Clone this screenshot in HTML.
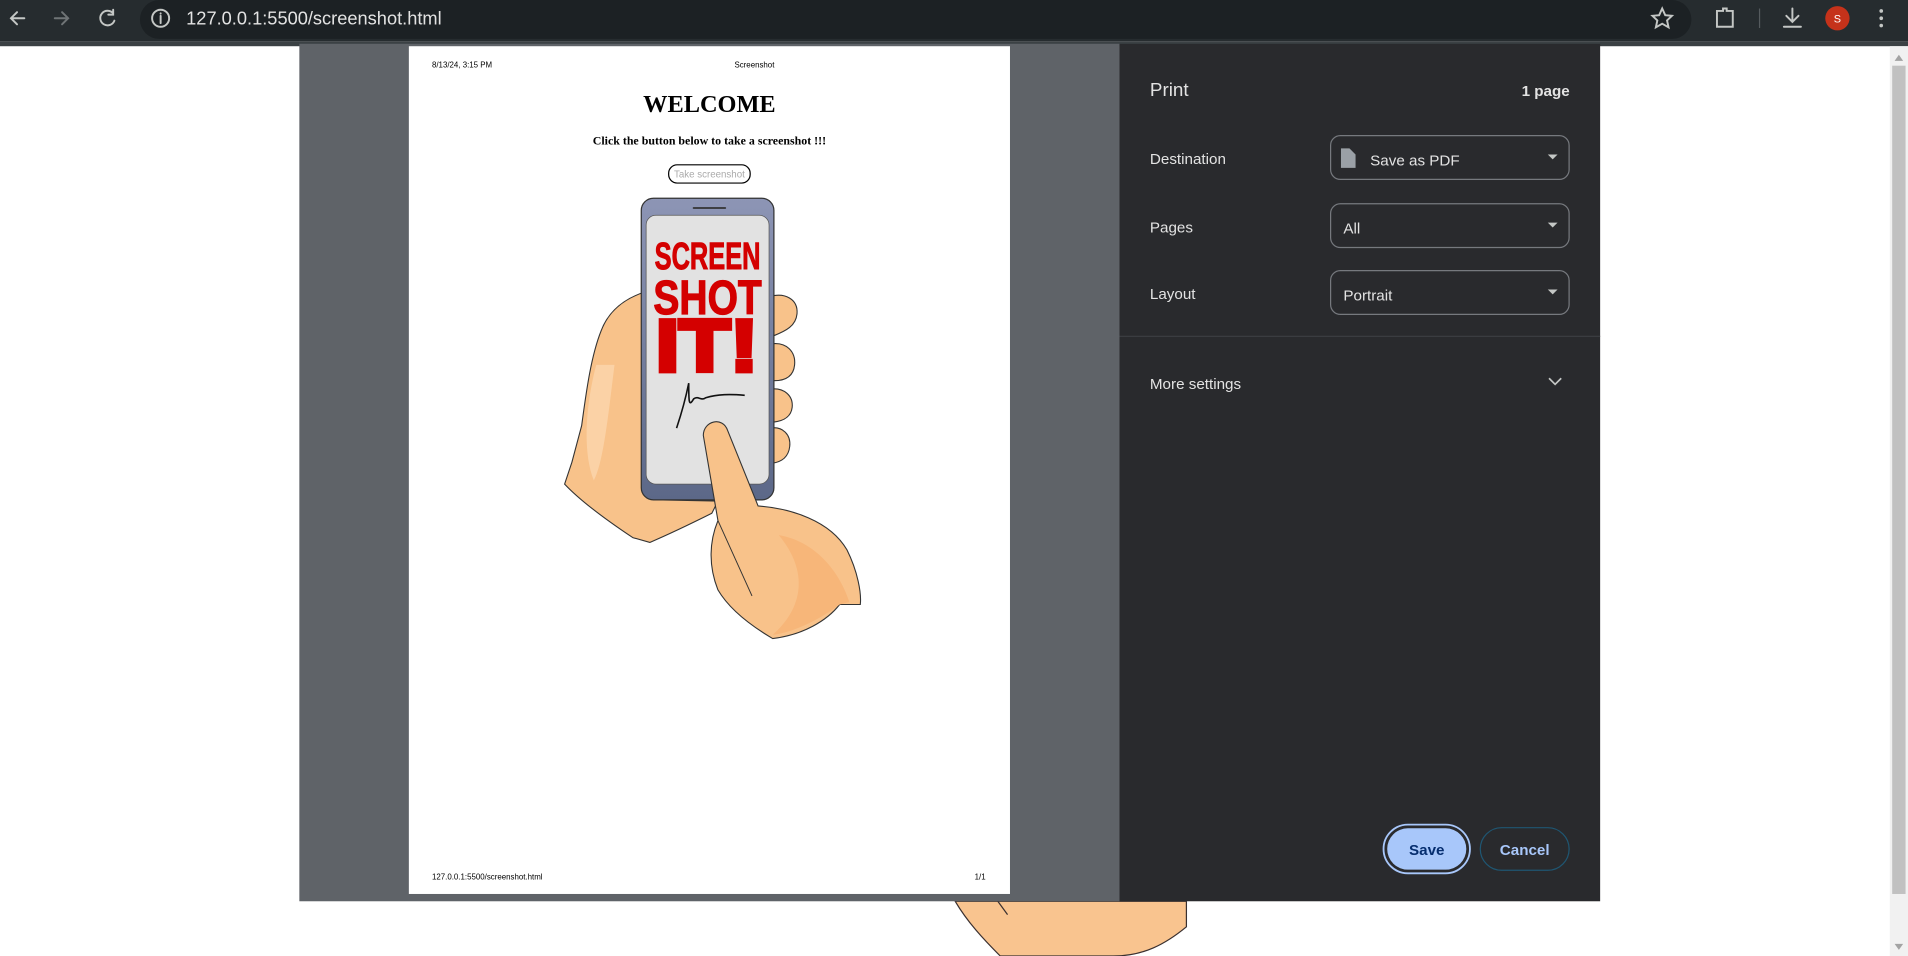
<!DOCTYPE html>
<html><head><meta charset="utf-8"><style>
html,body{margin:0;padding:0;width:1908px;height:956px;overflow:hidden;background:#fff}
svg{position:absolute;left:0;top:0;display:block}
</style></head><body>
<svg width="1908" height="956" viewBox="0 0 1568 786" preserveAspectRatio="none" xmlns="http://www.w3.org/2000/svg" font-family="'Liberation Sans', sans-serif">
<rect x="0" y="0" width="1568" height="34" fill="#262c2f"/>
<rect x="0" y="34" width="1568" height="4" fill="#3b4144"/>
<rect x="115" y="0" width="1275" height="32" rx="16" fill="#1c2124"/>
<g stroke="#c4c7c5" stroke-width="1.6" fill="none" stroke-linecap="round">
<path d="M20,15 H9 M14,10 L9,15 L14,20"/>
<path d="M45,15 H56 M51,10 L56,15 L51,20" stroke="#6f7476"/>
<path d="M93,11 A6,6 0 1 0 94,17 M93,8 V12 H89"/>
<circle cx="132" cy="15" r="7"/>
<path d="M132,13 V19 M132,11 V11.2"/>
<path d="M1366,7 L1368.5,12.5 L1374,13 L1370,16.8 L1371.2,22.5 L1366,19.5 L1360.8,22.5 L1362,16.8 L1358,13 L1363.5,12.5 Z"/>
<path d="M1411,9 H1416 V7 H1419 V9 H1424 V22 H1411 Z"/>
<path d="M1473,7 V18 M1468,13 L1473,18 L1478,13 M1466,22 H1480"/>
</g>
<line x1="1446" y1="7" x2="1446" y2="23" stroke="#555b5e"/>
<text x="153" y="20" font-size="15" fill="#e3e3e3">127.0.0.1:5500/screenshot.html</text>
<circle cx="1510" cy="15" r="10" fill="#c5321a"/>
<text x="1510" y="18.5" font-size="9" fill="#fff" text-anchor="middle">S</text>
<g fill="#c4c7c5"><circle cx="1546" cy="9" r="1.5"/><circle cx="1546" cy="15" r="1.5"/><circle cx="1546" cy="21" r="1.5"/></g>
<rect x="1553" y="38" width="15" height="748" fill="#f1f1f1"/>
<rect x="1555" y="54" width="11" height="681" fill="#c1c1c1"/>
<path d="M1557,50 L1560.5,45 L1564,50 Z M1557,776 L1560.5,781 L1564,776 Z" fill="#a3a3a3"/>
<path d="M785,741 L975,741 L975,762 C958,776 940,786 915,786 L822,786 C808,772 795,758 785,741 Z" fill="#f9c48f" stroke="#3a3030" stroke-width="1"/>
<path d="M820,741 L828,752" stroke="#3a3030" fill="none"/>
<rect x="246" y="36" width="674" height="705" fill="#5f6368"/>
<rect x="920" y="36" width="395" height="705" fill="#292a2d"/>
<rect x="336" y="38" width="494" height="697" fill="#fff"/>
<text x="355" y="55.5" font-size="6.5" fill="#000">8/13/24, 3:15 PM</text>
<text x="620" y="55.5" font-size="6.5" fill="#000" text-anchor="middle">Screenshot</text>
<text x="583" y="92" font-size="20" font-weight="bold" font-family="'Liberation Serif',serif" text-anchor="middle">WELCOME</text>
<text x="583" y="119" font-size="9.8" font-weight="bold" font-family="'Liberation Serif',serif" text-anchor="middle">Click the button below to take a screenshot !!!</text>
<rect x="549.5" y="135.5" width="67" height="15" rx="7" fill="#fff" stroke="#000" stroke-width="1"/>
<text x="583" y="146" font-size="8" fill="#aaa" text-anchor="middle">Take screenshot</text>
<path d="M530,240 C512,246 500,256 494,272 C486,292 482,320 478,350 L470,380 L464,398 C480,415 505,432 520,442 L534,446 C548,440 565,432 585,422 L590,412 L540,411 Z" fill="#f8c28a" stroke="#333" stroke-width="0.9"/>
<path d="M490,300 C482,330 478,370 488,395 C496,380 500,340 505,300 Z" fill="#fbd2a6"/>
<g fill="#f8c28a" stroke="#333" stroke-width="0.9">
<path d="M632,244 C645,240 656,246 655,258 C654,268 646,272 636,276 Z"/>
<path d="M632,283 C647,280 654,290 653,300 C652,310 645,313 636,313 Z"/>
<path d="M632,320 C645,318 652,326 651,335 C650,343 644,346 636,347 Z"/>
<path d="M632,352 C644,350 650,358 649,367 C648,376 642,380 634,381 Z"/>
</g>
<defs><linearGradient id="pg" x1="0" y1="0" x2="0" y2="1"><stop offset="0" stop-color="#8d95b5"/><stop offset="1" stop-color="#5c6888"/></linearGradient></defs>
<rect x="527" y="163" width="109" height="248" rx="10" fill="url(#pg)" stroke="#333" stroke-width="1"/>
<rect x="531" y="177" width="101" height="221" rx="8" fill="#e2e2e2" stroke="#555" stroke-width="0.6"/>
<line x1="570" y1="171" x2="596" y2="171" stroke="#333" stroke-width="1.5" stroke-linecap="round"/>
<g fill="#d40000" stroke="#d40000" font-family="'Liberation Sans Narrow','Liberation Sans',sans-serif" font-weight="bold">
<text x="538" y="221" font-size="31" stroke-width="0.8" textLength="87" lengthAdjust="spacingAndGlyphs">SCREEN</text>
<text x="537" y="258" font-size="40" stroke-width="1" textLength="89" lengthAdjust="spacingAndGlyphs">SHOT</text>
<text x="539" y="305" font-size="60" stroke-width="4" textLength="84" lengthAdjust="spacingAndGlyphs">IT!</text>
</g>
<path d="M556,352 C560,340 564,325 566,315 C566,330 566,335 570,328 C574,325 576,330 580,327 C590,324 600,324 612,325" fill="none" stroke="#111" stroke-width="1.3"/>
<path d="M578,358 C578,346 594,342 598,354 L623,416 C650,418 682,428 696,452 C705,470 708,488 707,497 L690,497 C680,510 660,522 635,525 C618,515 600,502 590,485 C582,465 583,445 590,428 Z" fill="#f8c28a" stroke="#333" stroke-width="0.9"/>
<path d="M640,440 C670,445 690,470 698,495 L690,497 C670,512 650,520 635,522 C660,500 665,470 640,440 Z" fill="#f7b679"/>
<path d="M590,428 L618,490" stroke="#333" stroke-width="0.8" fill="none"/>
<text x="355" y="723" font-size="6.5" fill="#000">127.0.0.1:5500/screenshot.html</text>
<text x="810" y="723" font-size="6.5" fill="#000" text-anchor="end">1/1</text>
<text x="945" y="79" font-size="15.5" fill="#e3e3e3">Print</text>
<text x="1290" y="79" font-size="12.5" font-weight="bold" fill="#e3e3e3" text-anchor="end">1 page</text>
<g font-size="12.5" fill="#e3e3e3">
<text x="945" y="135">Destination</text>
<text x="945" y="191">Pages</text>
<text x="945" y="246">Layout</text>
<text x="945" y="320">More settings</text>
<text x="1126" y="136">Save as PDF</text>
<text x="1104" y="192">All</text>
<text x="1104" y="247">Portrait</text>
</g>
<g fill="none" stroke="#76797e" stroke-width="1">
<rect x="1093.5" y="111.5" width="196" height="36" rx="8"/>
<rect x="1093.5" y="167.5" width="196" height="36" rx="8"/>
<rect x="1093.5" y="222.5" width="196" height="36" rx="8"/>
</g>
<path d="M1102,122 H1109 L1114,127 V138 H1102 Z" fill="#9aa0a6"/>
<g fill="#c4c7c5"><path d="M1272,127 H1280 L1276,131 Z"/><path d="M1272,183 H1280 L1276,187 Z"/><path d="M1272,238 H1280 L1276,242 Z"/></g>
<path d="M1273,311 L1278,316 L1283,311" fill="none" stroke="#c4c7c5" stroke-width="1.4"/>
<line x1="920" y1="276.5" x2="1315" y2="276.5" stroke="#3d3f43"/>
<rect x="1137" y="678" width="71" height="40" rx="20" fill="none" stroke="#a8c7fa" stroke-width="1.5"/>
<rect x="1140" y="681" width="65" height="34" rx="17" fill="#a8c7fa"/>
<text x="1172.5" y="703" font-size="12.5" font-weight="bold" fill="#062e6f" text-anchor="middle">Save</text>
<rect x="1216.5" y="680.5" width="73" height="35" rx="17.5" fill="none" stroke="#1f5672" stroke-width="1"/>
<text x="1253" y="703" font-size="12.5" font-weight="bold" fill="#a8c7fa" text-anchor="middle">Cancel</text>
</svg>
</body></html>
